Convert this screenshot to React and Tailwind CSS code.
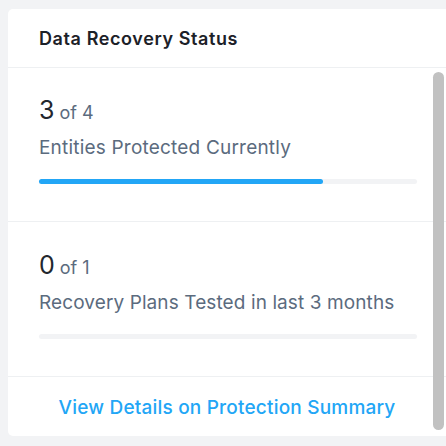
export default function App() {
  const font = { fontFamily: 'Inter, "Noto Sans", sans-serif' };
  return (
    <div className="w-[446px] h-[446px] bg-[#f2f3f5] pt-[9px] pl-[8px] overflow-hidden" style={font}>
      <div className="w-[438px] h-[427px] bg-white rounded-l-[5px] flex flex-col relative">
        <div className="h-[59px] border-b border-[#eef0f2] flex items-center pl-[31px] pt-[1px]">
          <span className="text-[18px] font-semibold text-[#1c2128] tracking-[0.6px]">Data Recovery Status</span>
        </div>
        <div className="h-[154px] border-b border-[#eef0f2] pl-[31px] pt-[30px]">
          <div className="flex items-baseline gap-[5px] leading-none">
            <span className="text-[25px] text-[#22272e]">3</span>
            <span className="text-[18px] text-[#5b6b7e]">of 4</span>
          </div>
          <div className="text-[19px] text-[#5b6b7e] mt-[13px] leading-[24px] tracking-[0.2px]">Entities Protected Currently</div>
          <div className="w-[378px] h-[5px] bg-[#f2f3f5] rounded-full mt-[19px]">
            <div className="h-full bg-[#22a6f6] rounded-full" style={{ width: "75%" }} />
          </div>
        </div>
        <div className="h-[155px] border-b border-[#eef0f2] pl-[31px] pt-[31px]">
          <div className="flex items-baseline gap-[5px] leading-none">
            <span className="text-[25px] text-[#22272e]">0</span>
            <span className="text-[18px] text-[#5b6b7e]">of 1</span>
          </div>
          <div className="text-[19px] text-[#5b6b7e] mt-[13px] leading-[24px] tracking-[0.1px]">Recovery Plans Tested in last 3 months</div>
          <div className="w-[378px] h-[5px] bg-[#f2f3f5] rounded-full mt-[19px]" />
        </div>
        <div className="flex-1 flex items-center justify-center pt-[3px]">
          <span className="text-[19px] font-medium text-[#22a6f6] tracking-[0.2px]">View Details on Protection Summary</span>
        </div>
        <div className="absolute left-[425px] top-[63px] w-[11px] h-[358px] bg-[#c1c1c1] rounded-full" />
      </div>
    </div>
  );
}
